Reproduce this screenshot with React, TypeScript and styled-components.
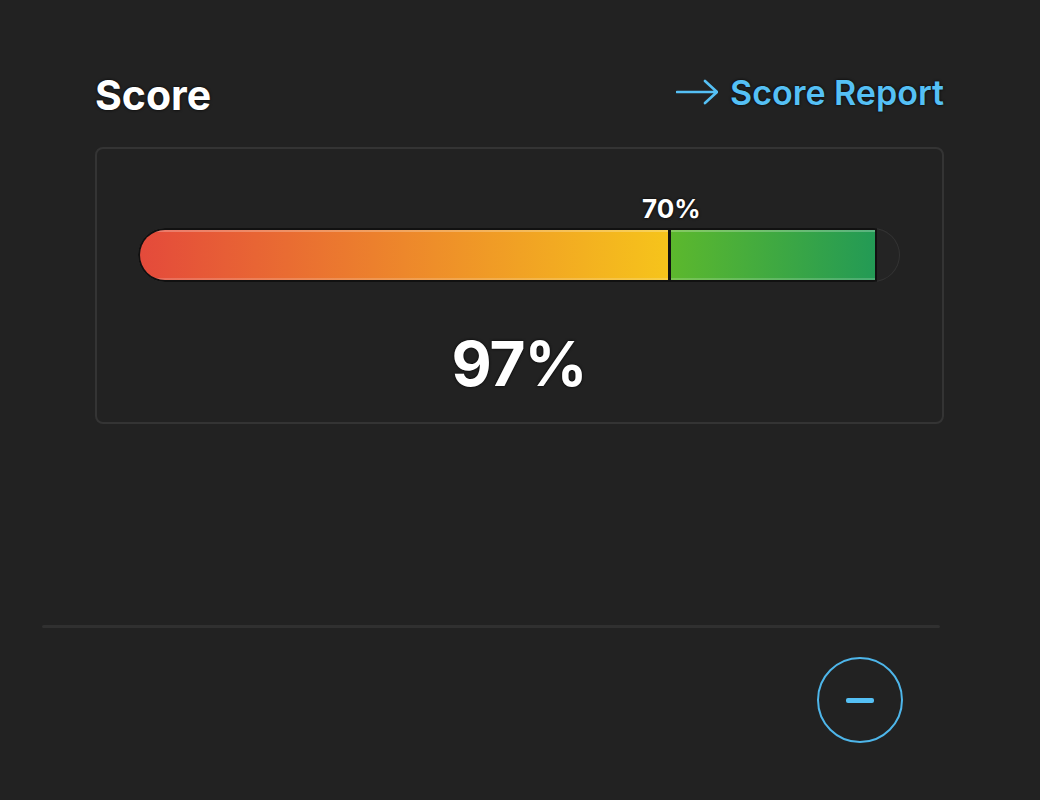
import React from "react";
import styled, { createGlobalStyle } from "styled-components";

const GlobalStyle = createGlobalStyle`
  html, body {
    margin: 0;
    padding: 0;
    background: #222222;
  }
  body {
    font-family: "Inter", "Liberation Sans", sans-serif;
    color: #ffffff;
  }
`;

const Page = styled.div`
  width: 1040px;
  height: 800px;
  display: flex;
  flex-direction: column;
  background: #222222;
`;

const ScoreSection = styled.section`
  display: flex;
  flex-direction: column;
  padding: 70px 96px 0 95px;
`;

const Header = styled.div`
  display: flex;
  justify-content: space-between;
  align-items: center;
  height: 50px;
`;

const Title = styled.h2`
  margin: 0;
  font-size: 41px;
  font-weight: 700;
  letter-spacing: 0;
  text-shadow: 0 0 3px #000;
`;

const ReportLink = styled.a`
  display: flex;
  align-items: center;
  gap: 12px;
  color: #55c0f5;
  font-size: 34px;
  font-weight: 600;
  text-decoration: none;
  cursor: pointer;
  text-shadow: 0 0 3px #000;
  margin-top: -6px;
`;

const Card = styled.div`
  margin-top: 27px;
  height: 277px;
  box-sizing: border-box;
  border: 2px solid #343434;
  border-radius: 8px;
  padding: 46px 42px 0 41px;
  display: flex;
  flex-direction: column;
`;

const MarkerRow = styled.div`
  position: relative;
  height: 33px;
`;

const Marker = styled.span<{ at: number }>`
  position: absolute;
  left: ${(p) => p.at}%;
  top: -2px;
  transform: translateX(-50%);
  font-size: 26px;
  font-weight: 700;
  text-shadow: 0 0 3px #000;
`;

const Track = styled.div`
  height: 54px;
  border-radius: 27px;
  background: #242424;
  box-shadow: inset 0 0 0 1px #333;
  display: flex;
  overflow: hidden;
`;

const Fill = styled.div`
  display: flex;
  height: 100%;
  box-sizing: border-box;
  border: 2px solid #111;
  border-radius: 27px 0 0 27px;
  overflow: hidden;
  background: #111;
  gap: 3px;
`;

const Segment = styled.div<{ from: string; to: string }>`
  height: 100%;
  background: linear-gradient(90deg, ${(p) => p.from}, ${(p) => p.to});
  box-shadow: inset 0 2px 0 rgba(255, 255, 255, 0.25),
    inset 0 -2px 0 rgba(255, 255, 255, 0.18);
`;

const Value = styled.div`
  margin-top: 44px;
  text-align: center;
  font-size: 62px;
  font-weight: 700;
  letter-spacing: -1px;
  text-shadow: 0 0 3px #000;
`;

const Footer = styled.div`
  margin-top: 201px;
  margin-left: 42px;
  width: 898px;
  display: flex;
  flex-direction: column;
  align-items: flex-end;
`;

const Divider = styled.div`
  width: 100%;
  height: 3px;
  border-radius: 2px;
  background: #303030;
`;

const CollapseButton = styled.button`
  margin-top: 29px;
  margin-right: 37px;
  width: 86px;
  height: 86px;
  border-radius: 50%;
  border: 2px solid #4eb6ea;
  background: transparent;
  display: flex;
  align-items: center;
  justify-content: center;
  padding: 0;
  cursor: pointer;
`;

const Minus = styled.span`
  width: 28px;
  height: 5px;
  border-radius: 2px;
  background: #55c0f5;
`;

const threshold = 70;
const score = 97;

export default function App() {
  return (
    <Page>
      <GlobalStyle />
      <ScoreSection>
        <Header>
          <Title>Score</Title>
          <ReportLink>
            <svg width="42" height="26" viewBox="0 0 42 26" fill="none">
              <path
                d="M1 13H40M29 2L41 13L29 24"
                stroke="#55c0f5"
                strokeWidth="2.6"
                strokeLinecap="round"
                strokeLinejoin="round"
              />
            </svg>
            Score Report
          </ReportLink>
        </Header>
        <Card>
          <MarkerRow>
            <Marker at={threshold}>{threshold}%</Marker>
          </MarkerRow>
          <Track>
            <Fill style={{ width: `${score}%` }}>
              <Segment
                from="#e44a3b"
                to="#f6c41b"
                style={{ flex: threshold }}
              />
              <Segment
                from="#5cb82d"
                to="#239a55"
                style={{ flex: score - threshold }}
              />
            </Fill>
          </Track>
          <Value>{score}%</Value>
        </Card>
      </ScoreSection>
      <Footer>
        <Divider />
        <CollapseButton aria-label="Collapse">
          <Minus />
        </CollapseButton>
      </Footer>
    </Page>
  );
}
